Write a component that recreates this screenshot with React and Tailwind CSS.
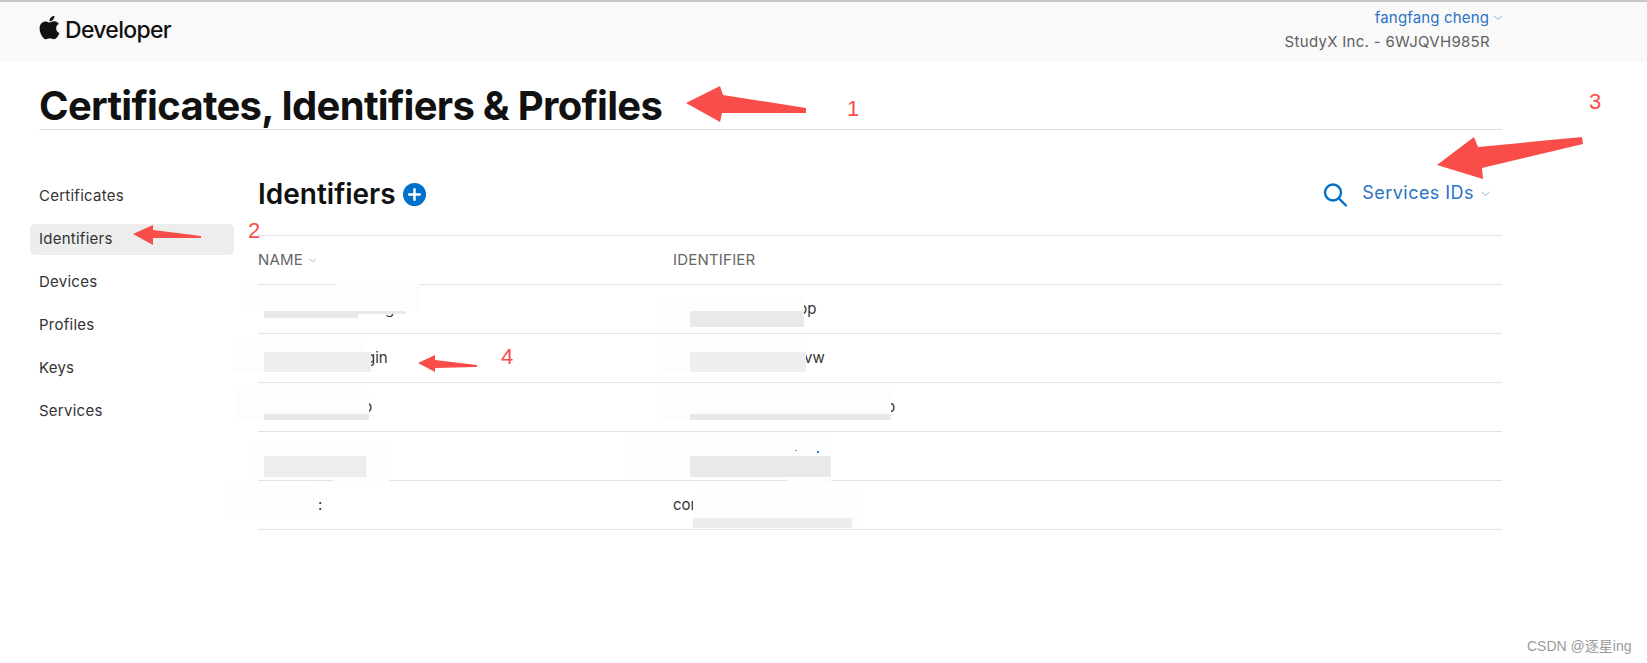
import { FaApple } from 'react-icons/fa';

const NAV_ITEMS = ['Certificates', 'Identifiers', 'Devices', 'Profiles', 'Keys', 'Services'];

// only the tail of each value shows, the rest is blurred out in the picture
const ROWS = [
  { name: 'g', namePad: 'pl-[127px]', id: 'pp', idPad: 'pl-[125px]' },
  { name: 'gin', namePad: 'pl-[108px]', id: 'vw', idPad: 'pl-[131px]' },
  { name: 'p', namePad: 'pl-[105px]', id: 'p', idPad: 'pl-[213px]' },
  { name: '', namePad: '', id: '', idPad: '' },
  { name: ':', namePad: 'pl-[60px]', id: 'com', idPad: '' },
];

const PATCHES = [
  'left-[240px] top-[285px] w-[180px] h-[27px] bg-[#fdfdfd]',
  'left-[336px] top-[283px] w-[84px] h-[3px] bg-[#fdfdfd]',
  'left-[264px] top-[311px] w-[94px] h-[7px] bg-[#e9e9e9]',
  'left-[358px] top-[311px] w-[48px] h-[3px] bg-[#e9e9e9]',
  'left-[232px] top-[339px] w-[132px] h-[33px] bg-[#fdfdfd]',
  'left-[264px] top-[352px] w-[107px] h-[20px] bg-[#eeeeee]',
  'left-[236px] top-[390px] w-[133px] h-[30px] bg-[#fdfdfd]',
  'left-[264px] top-[414px] w-[105px] h-[6px] bg-[#e8e8e8]',
  'left-[250px] top-[442px] w-[140px] h-[37px] bg-[#fdfdfd]',
  'left-[333px] top-[479px] w-[57px] h-[3px] bg-[#fdfdfd]',
  'left-[264px] top-[456px] w-[102px] h-[21px] bg-[#ededed]',
  'left-[226px] top-[486px] w-[92px] h-[29px] bg-[#fdfdfd]',
  'left-[657px] top-[297px] w-[147px] h-[30px] bg-[#fdfdfd]',
  'left-[690px] top-[311px] w-[114px] h-[16px] bg-[#e9e9e9]',
  'left-[657px] top-[342px] w-[149px] h-[30px] bg-[#fdfdfd]',
  'left-[690px] top-[352px] w-[116px] h-[20px] bg-[#eeeeee]',
  'left-[657px] top-[390px] w-[234px] h-[30px] bg-[#fdfdfd]',
  'left-[690px] top-[414px] w-[201px] h-[6px] bg-[#e8e8e8]',
  'left-[625px] top-[438px] w-[206px] h-[41px] bg-[#fdfdfd]',
  'left-[787px] top-[479px] w-[44px] h-[3px] bg-[#fdfdfd]',
  'left-[690px] top-[456px] w-[141px] h-[21px] bg-[#e9e9e9]',
  'left-[795px] top-[450px] w-[2px] h-[1px] bg-[#9a9a9a]',
  'left-[817px] top-[451px] w-[2px] h-[2px] bg-[#3b82c4]',
  'left-[693px] top-[495px] w-[171px] h-[30px] bg-[#fdfdfd]',
  'left-[693px] top-[518px] w-[159px] h-[10px] bg-[#ececec]',
];

const NUMBERS = [
  { n: '1', cls: 'left-[847px] top-[94px]' },
  { n: '2', cls: 'left-[248px] top-[216px]' },
  { n: '3', cls: 'left-[1589px] top-[87px]' },
  { n: '4', cls: 'left-[501px] top-[342px]' },
];

const Chevron = ({ className }) => (
  <svg viewBox="0 0 10 6" className={className} fill="none" stroke="currentColor" strokeWidth="1">
    <path d="M1 1l4 3.5L9 1" />
  </svg>
);

const App = () => (
  <div className="relative h-[663px] w-[1647px] overflow-hidden bg-white font-['Inter',sans-serif]">
    {/* Top bar */}
    <header className="flex h-[62px] items-start justify-between border-t-2 border-[#c8c8c8] bg-[#f9f9f9] pl-[39px] pr-[144px]">
      <div className="flex items-center pt-[13px] text-[#111111]">
        <FaApple className="-mt-[6px] h-[27px] w-[21px]" />
        <span className="ml-[5px] text-[23px] font-medium leading-[30px] tracking-[-0.7px]">Developer</span>
      </div>
      <div className="flex flex-col items-end pt-[4px] text-[15px] leading-[24px]">
        <div className="flex items-center gap-[4px] tracking-[0.15px] text-[#2b72c4]">
          <span>fangfang cheng</span>
          <Chevron className="h-[6px] w-[10px] text-[#8ab4dc]" />
        </div>
        <div className="pr-[13px] tracking-[0.3px] text-[#5f5f5f]">StudyX Inc. - 6WJQVH985R</div>
      </div>
    </header>

    <div className="pl-[39px] pr-[145px]">
      <h1 className="h-[68px] border-b border-[#dedede] pt-[19px] text-[40px] font-bold leading-[50px] tracking-[-0.7px] text-[#111111]">
        Certificates, Identifiers &amp; Profiles
      </h1>

      <div className="flex pt-[23px]">
        {/* Sidebar */}
        <nav className="-ml-[9px] mt-[28px] flex w-[204px] flex-col gap-[12px] text-[15px] tracking-[0.25px] text-[#333333]">
          {NAV_ITEMS.map((item) => (
            <div
              key={item}
              className={`flex h-[31px] items-center rounded-[5px] pl-[9px] ${item === 'Identifiers' ? 'bg-[#ededed]' : ''}`}
            >
              {item}
            </div>
          ))}
        </nav>

        {/* Identifiers table */}
        <main className="ml-[24px] flex-1">
          <div className="flex h-[82px] items-center justify-between">
            <div className="flex items-center gap-[7px]">
              <h2 className="text-[28px] font-semibold leading-[34px] text-[#111111]">Identifiers</h2>
              <svg viewBox="0 0 24 24" className="h-[23px] w-[23px]">
                <circle cx="12" cy="12" r="12" fill="#0070c9" />
                <path d="M12 6.5v11M6.5 12h11" stroke="#fff" strokeWidth="2.6" strokeLinecap="round" />
              </svg>
            </div>
            <div className="flex items-center pr-[11px] text-[#2b72c4]">
              <svg viewBox="0 0 24 24" className="mr-[15px] h-[25px] w-[24px] text-[#0070c9]" fill="none" stroke="currentColor" strokeWidth="2.4">
                <circle cx="10" cy="10" r="8" />
                <path d="M15.8 15.8L23 23" strokeLinecap="round" />
              </svg>
              <span className="-mt-[4px] text-[18px] tracking-[0.45px]">Services IDs</span>
              <Chevron className="ml-[6px] h-[6px] w-[11px] text-[#8ab4dc]" />
            </div>
          </div>

          <div className="flex h-[50px] items-center border-y border-[#e3e3e3] text-[15px] tracking-[0.2px] text-[#666666]">
            <div className="flex w-[415px] items-center gap-[5px]">
              NAME
              <Chevron className="h-[5px] w-[9px] text-[#a8a8a8]" />
            </div>
            <div>IDENTIFIER</div>
          </div>

          {ROWS.map((row, i) => (
            <div key={i} className="flex h-[49px] items-center border-b border-[#e3e3e3] text-[15px] text-[#333333]">
              <div className={`w-[415px] ${row.namePad}`}>{row.name}</div>
              <div className={row.idPad}>{row.id}</div>
            </div>
          ))}
        </main>
      </div>
    </div>

    {/* Blurred redactions sit on top of the table */}
    {PATCHES.map((cls) => (
      <div key={cls} className={`absolute ${cls}`} />
    ))}

    {/* Annotations */}
    <svg viewBox="0 0 1647 663" className="pointer-events-none absolute left-0 top-0 h-[663px] w-[1647px]" fill="#f94d4a">
      <polygon points="686,103 720,86 723,95 806,108 806,113 722,113 720,122" />
      <polygon points="133,234 153,225 153,230 201,236 201,238 153,238 153,245" />
      <polygon points="1437,165 1474,137 1478,147 1582,137 1583,144 1482,168 1483,179" />
      <polygon points="418,363 435,355 435,360 477,365 477,367 435,368 435,372" />
    </svg>
    {NUMBERS.map(({ n, cls }) => (
      <span key={n} className={`absolute text-[22px] leading-[30px] text-[#f94d4a] font-['Liberation_Sans',sans-serif] ${cls}`}>
        {n}
      </span>
    ))}

    <span className="absolute left-[1527px] top-[636px] text-[14px] leading-[20px] text-[#9a9a9a] font-['Liberation_Sans','Noto_Sans_CJK_SC',sans-serif]">
      CSDN @逐星ing
    </span>
  </div>
);

export default App;
